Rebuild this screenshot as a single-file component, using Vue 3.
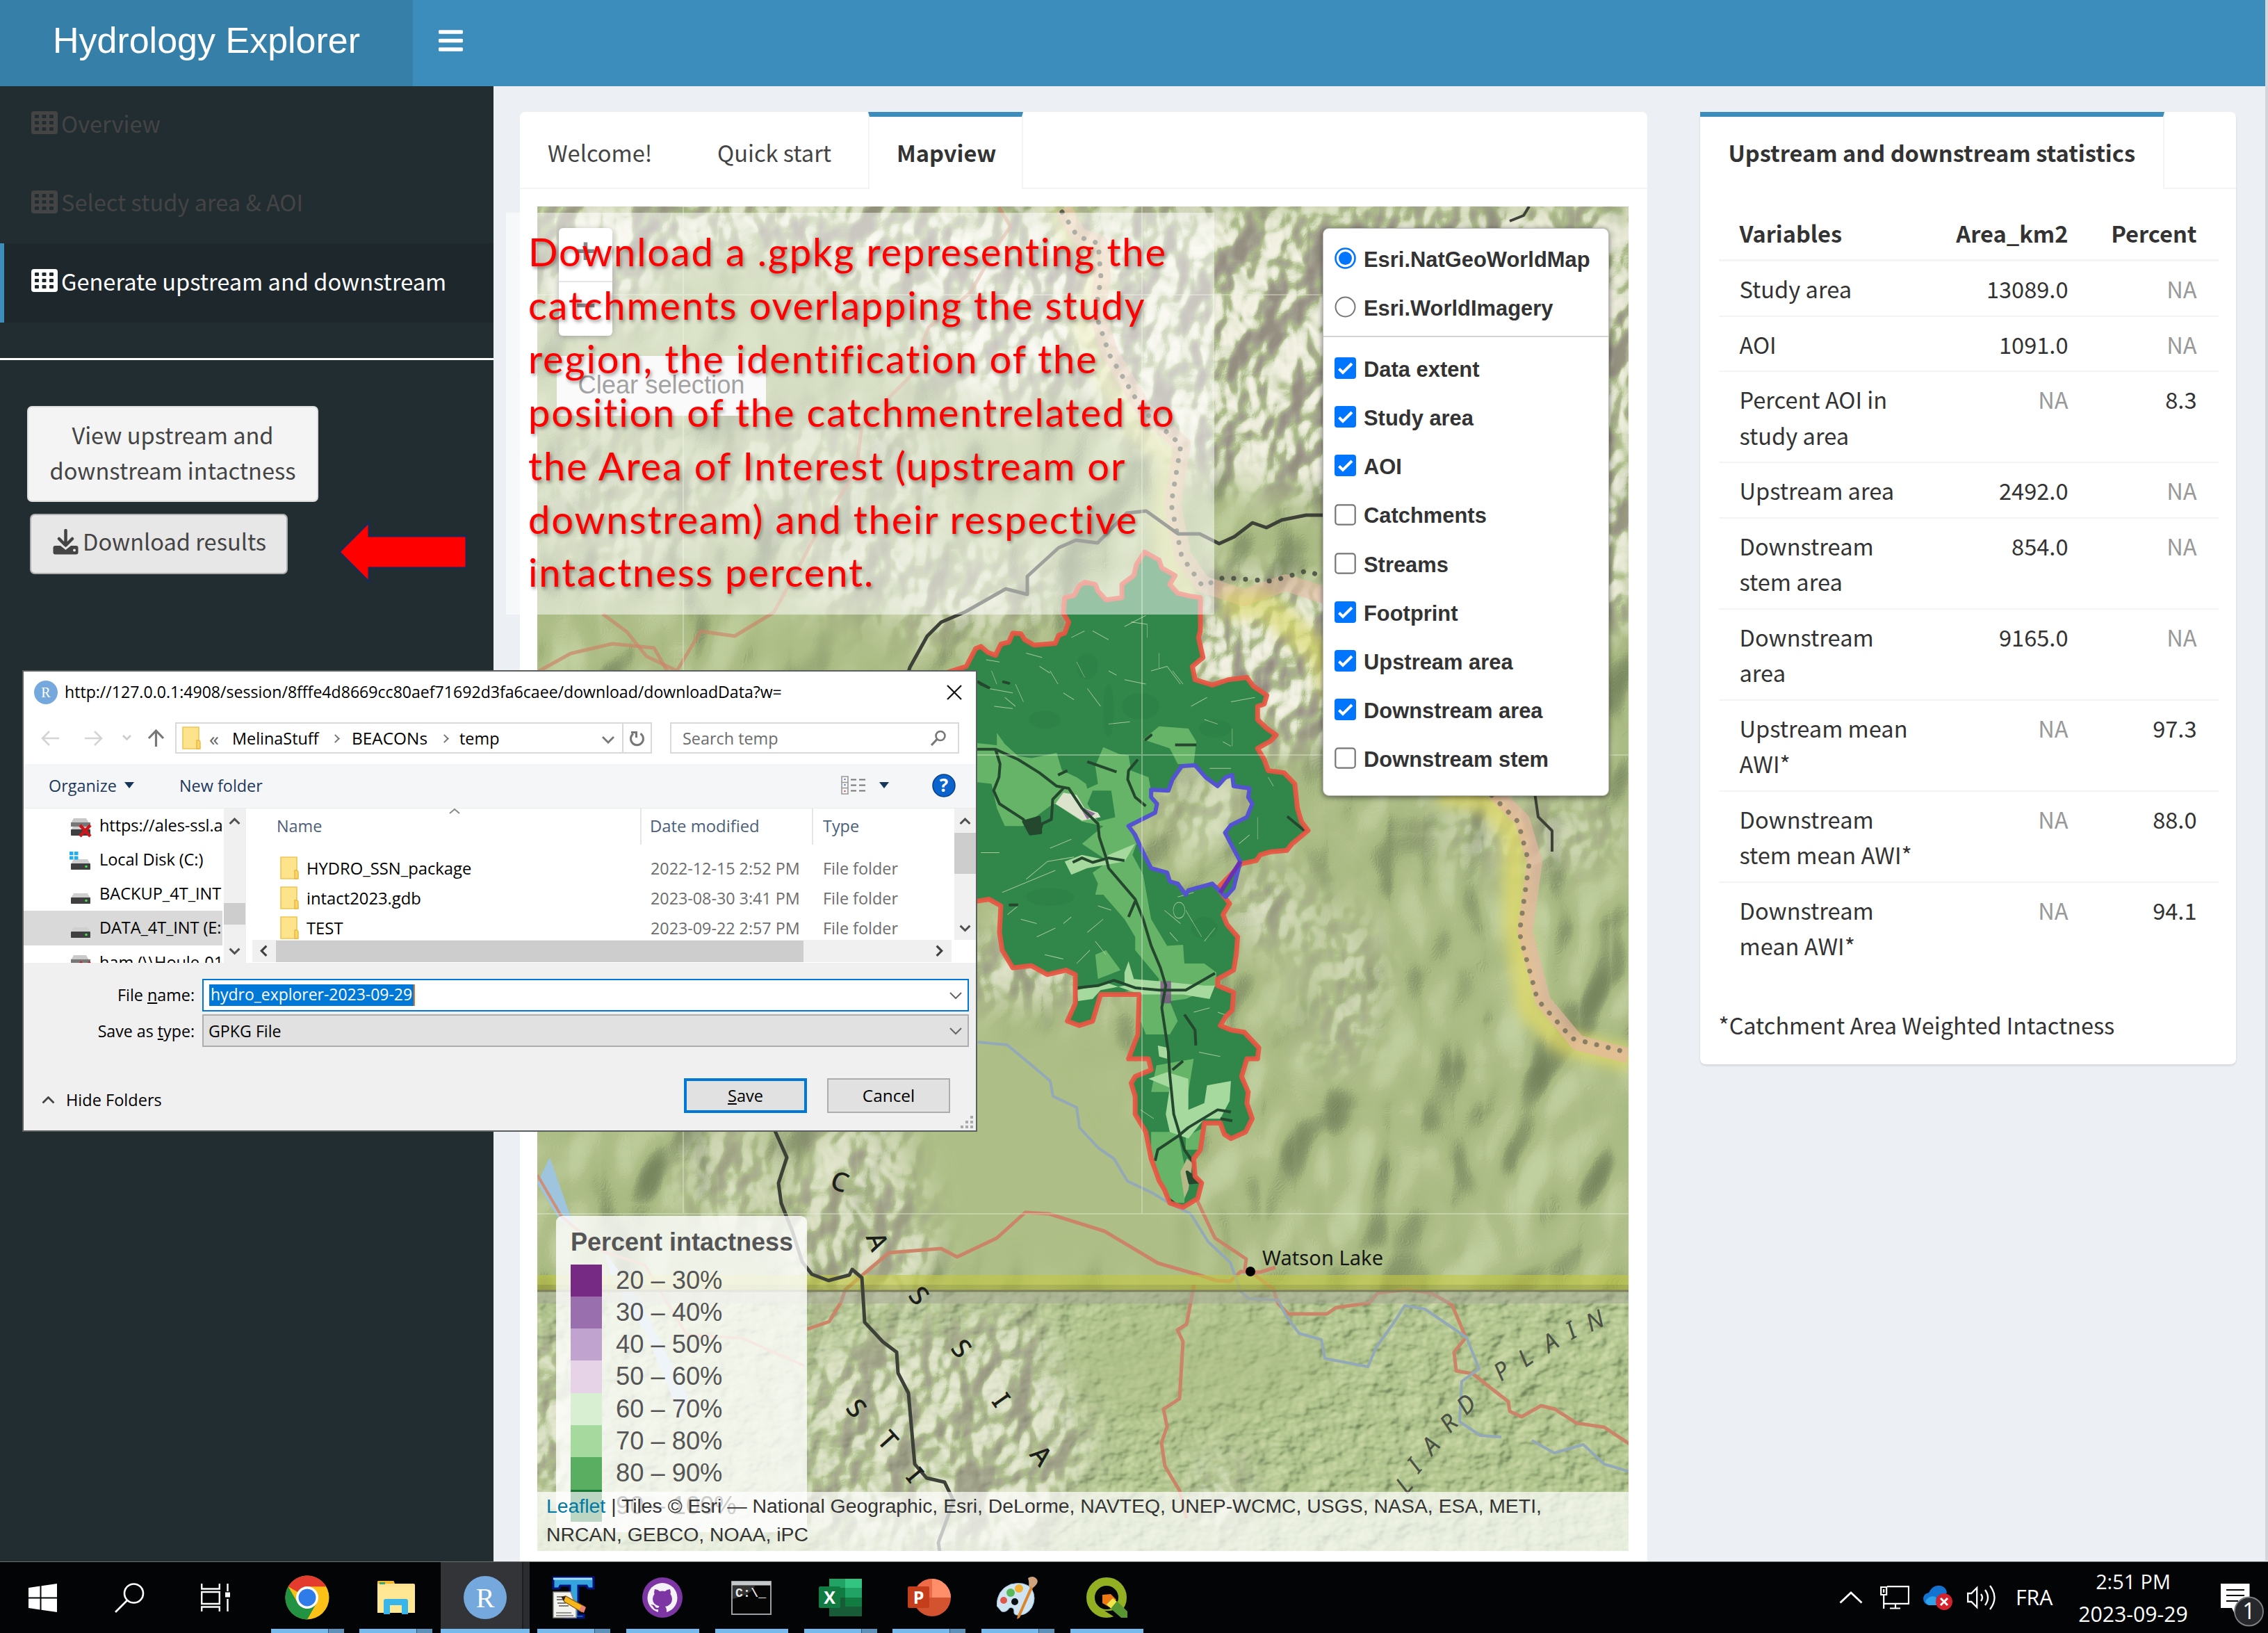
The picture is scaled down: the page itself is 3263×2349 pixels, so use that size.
<script setup>
const menu = [
  { label: 'Overview', active: false },
  { label: 'Select study area & AOI', active: false },
  { label: 'Generate upstream and downstream', active: true },
]

const stats = [
  ['Study area', '13089.0', 'NA'],
  ['AOI', '1091.0', 'NA'],
  ['Percent AOI in study area', 'NA', '8.3'],
  ['Upstream area', '2492.0', 'NA'],
  ['Downstream stem area', '854.0', 'NA'],
  ['Downstream area', '9165.0', 'NA'],
  ['Upstream mean AWI*', 'NA', '97.3'],
  ['Downstream stem mean AWI*', 'NA', '88.0'],
  ['Downstream mean AWI*', 'NA', '94.1'],
]

const baseLayers = [
  { label: 'Esri.NatGeoWorldMap', on: true },
  { label: 'Esri.WorldImagery', on: false },
]
const overlays = [
  { label: 'Data extent', on: true },
  { label: 'Study area', on: true },
  { label: 'AOI', on: true },
  { label: 'Catchments', on: false },
  { label: 'Streams', on: false },
  { label: 'Footprint', on: true },
  { label: 'Upstream area', on: true },
  { label: 'Downstream area', on: true },
  { label: 'Downstream stem', on: false },
]

const legend = [
  ['#762a83', '20 – 30%'],
  ['#9a6fad', '30 – 40%'],
  ['#c0a4cf', '40 – 50%'],
  ['#e6d3e8', '50 – 60%'],
  ['#d8efd2', '60 – 70%'],
  ['#a5d99e', '70 – 80%'],
  ['#5aae61', '80 – 90%'],
  ['#1b7837', '90 – 100%'],
]

const note = [
  'Download a .gpkg representing the',
  'catchments overlapping the study',
  'region, the identification of the',
  'position of the catchmentrelated to',
  'the Area of Interest (upstream or',
  'downstream) and their respective',
  'intactness percent.',
]

const drives = [
  { label: 'https://ales-ssl.a', kind: 'broken' },
  { label: 'Local Disk (C:)', kind: 'win' },
  { label: 'BACKUP_4T_INT', kind: 'disk' },
  { label: 'DATA_4T_INT (E:', kind: 'disk', selected: true },
  { label: 'ham (\\\\Houle-01', kind: 'broken' },
]
const files = [
  ['HYDRO_SSN_package', '2022-12-15 2:52 PM'],
  ['intact2023.gdb', '2023-08-30 3:41 PM'],
  ['TEST', '2023-09-22 2:57 PM'],
]

const mapLetters = [
  ['C', 1208, 1700, 20], ['A', 1262, 1786, 68], ['S', 1322, 1864, 50], ['S', 1383, 1940, 50], ['I', 1440, 2014, 55], ['A', 1498, 2094, 50],
  ['S', 1232, 2026, 50], ['T', 1277, 2072, 48], ['I', 1316, 2122, 50],
]
const plainLetters = [
  ['L', 2021, 2137, -50], ['I', 2036, 2109, -50], ['A', 2059, 2080, -48], ['R', 2085, 2048, -46], ['D', 2110, 2021, -44],
  ['P', 2161, 1973, -36], ['L', 2195, 1954, -35], ['A', 2231, 1932, -33], ['I', 2261, 1915, -30], ['N', 2295, 1901, -25],
]

const tasks = ['chrome', 'folder', 'r', 't', 'github', 'cmd', 'excel', 'ppt', 'paint', 'qgis']
const stacked = ['chrome', 'folder', 't', 'excel', 'ppt', 'paint']

const region = '105,280 140,240 160,235 185,248 215,255 235,230 265,225 280,205 310,206 325,220 360,232 440,228 452,210 475,205 490,180 470,160 475,125 510,120 530,98 550,90 590,95 600,110 630,130 690,125 690,95 735,75 745,50 775,22 830,40 840,58 890,75 870,95 900,115 950,122 985,125 985,200 978,215 995,260 955,280 965,310 1030,322 1090,310 1160,305 1185,325 1235,345 1225,365 1200,370 1200,400 1235,420 1270,435 1250,448 1200,465 1225,490 1240,515 1300,520 1340,545 1350,600 1365,630 1390,650 1330,680 1310,695 1250,698 1210,705 1195,718 1140,725 1050,780 1095,815 1070,840 1085,862 1125,890 1120,930 1110,965 1050,985 1050,1000 1110,1015 1105,1055 1080,1070 1060,1090 1100,1100 1150,1105 1205,1140 1200,1165 1160,1165 1140,1205 1165,1240 1160,1265 1180,1300 1155,1330 1100,1345 1075,1335 1060,1310 1000,1310 985,1370 960,1390 965,1430 990,1445 975,1480 920,1500 870,1490 850,1460 830,1440 800,1390 780,1330 740,1290 740,1250 725,1220 740,1205 800,1190 790,1165 715,1165 750,1110 755,1020 610,1020 580,1080 530,1090 485,1080 515,1040 515,975 480,965 410,975 350,955 280,960 240,920 230,880 235,820 190,805 140,810 0,700 0,300'
const aoi = '715,640 815,610 822,590 800,575 800,558 865,560 880,535 915,505 965,503 1005,530 1050,550 1080,530 1105,525 1110,550 1170,555 1165,575 1180,590 1160,620 1100,638 1078,655 1135,720 1110,780 1080,800 1030,770 940,785 930,795 900,770 870,765 860,745 800,735 770,700 740,660'
const regionPath = `M${region}ZM${aoi}Z`
</script>

<template>
  <div class="screen">
    <header class="top">
      <div class="logo">Hydrology Explorer</div>
      <svg class="burger" viewBox="0 0 35 31"><path d="M2 3h31M2 15.500h31M2 28h31" stroke="#fff" stroke-width="5.500" stroke-linecap="round" /></svg>
    </header>

    <div class="body">
      <aside class="side">
        <div v-for="m in menu" :key="m.label" class="item" :class="{ active: m.active }">
          <svg viewBox="0 0 38 33"><rect width="38" height="33" rx="4" fill="currentColor" /><g class="holes"><template v-for="r in 3" :key="r"><rect v-for="k in 3" :key="k" :x="5 + (k - 1) * 10.500" :y="5 + (r - 1) * 9" width="6" height="5" rx="1" /></template></g></svg>
          <span>{{ m.label }}</span>
        </div>
        <div class="rule"></div>
        <button class="btn view">View upstream and<br />downstream intactness</button>
        <button class="btn dl">
          <svg viewBox="0 0 37 37"><path d="M18.500 2v20M9 14l9.500 9.500L28 14" fill="none" stroke="#444" stroke-width="4.500" stroke-linecap="round" stroke-linejoin="round" /><path d="M3.500 24H11l7.500 6 7.500-6h7.500q3 0 3 3v6.500q0 3-3 3h-30q-3 0-3-3V27q0-3 3-3z" fill="#444" /><circle cx="31" cy="30.500" r="2" fill="#e7e7e7" /></svg>
          Download results
        </button>
      </aside>

      <main class="main">
        <section class="card mapcard">
          <nav class="tabs">
            <span class="t1">Welcome!</span><span class="t2">Quick start</span><span class="t3 on">Mapview</span><span class="fill"></span>
          </nav>
          <div class="map">
            <svg class="tiles" viewBox="773 297 1570 1934">
              <defs>
                <filter id="hills" x="0" y="0" width="1" height="1" color-interpolation-filters="sRGB">
                  <feTurbulence type="fractalNoise" baseFrequency=".011 .0075" numOctaves="2" seed="12" />
                  <feDiffuseLighting surfaceScale="34" lighting-color="#fff"><feDistantLight azimuth="215" elevation="48" /></feDiffuseLighting>
                  <feComponentTransfer><feFuncR type="table" tableValues=".45 .48 .55 .66 .69 .76" /><feFuncG type="table" tableValues=".5 .54 .61 .73 .75 .82" /><feFuncB type="table" tableValues=".34 .38 .43 .51 .54 .63" /></feComponentTransfer>
                </filter>
                <filter id="peaks" x="0" y="0" width="1" height="1" color-interpolation-filters="sRGB">
                  <feTurbulence type="fractalNoise" baseFrequency=".015 .012" numOctaves="3" seed="5" />
                  <feDiffuseLighting surfaceScale="40" lighting-color="#fff"><feDistantLight azimuth="215" elevation="48" /></feDiffuseLighting>
                  <feComponentTransfer><feFuncR type="table" tableValues=".58 .62 .65 .68 .86 .96" /><feFuncG type="table" tableValues=".56 .6 .66 .74 .88 .95" /><feFuncB type="table" tableValues=".5 .55 .56 .54 .78 .9" /></feComponentTransfer>
                </filter>
                <filter id="fine" x="0" y="0" width="1" height="1" color-interpolation-filters="sRGB">
                  <feTurbulence type="fractalNoise" baseFrequency=".03 .04" numOctaves="3" seed="9" />
                  <feDiffuseLighting surfaceScale="7" lighting-color="#fff"><feDistantLight azimuth="215" elevation="48" /></feDiffuseLighting>
                  <feComponentTransfer><feFuncR type="table" tableValues=".4 .46 .56 .67 .72 .8" /><feFuncG type="table" tableValues=".48 .52 .64 .75 .79 .85" /><feFuncB type="table" tableValues=".34 .36 .45 .54 .58 .66" /></feComponentTransfer>
                </filter>
                <filter id="soft" x="-.3" y="-.3" width="1.600" height="1.600"><feGaussianBlur stdDeviation="28" /></filter>
                <filter id="soft2" x="-.5" y="-.5" width="2" height="2"><feGaussianBlur stdDeviation="9" /></filter>
                <mask id="mtn">
                  <g filter="url(#soft)" fill="#fff">
                    <rect x="760" y="280" width="640" height="90" /><rect x="780" y="330" width="180" height="130" />
                    <path d="M1150 290h1220v340l-120 20-250 90-300-60-160-120-120 30-200-100-100-80z" />
                    <ellipse cx="1200" cy="690" rx="170" ry="110" opacity=".5" /><ellipse cx="900" cy="720" rx="130" ry="130" opacity=".4" />
                    <ellipse cx="1330" cy="850" rx="200" ry="70" opacity=".7" />
                    <path d="M1740 820l220 40 0 190-120 40-90-60-60-80z" />
                    <rect x="2250" y="400" width="110" height="500" />
                    <ellipse cx="1840" cy="1310" rx="60" ry="50" /><ellipse cx="1920" cy="1420" rx="60" ry="110" opacity=".7" /><ellipse cx="1480" cy="1400" rx="140" ry="50" opacity=".7" />
                    <ellipse cx="1740" cy="1160" rx="80" ry="60" opacity=".5" />
                    <ellipse cx="2200" cy="1200" rx="150" ry="50" opacity=".5" />
                    <ellipse cx="1050" cy="1690" rx="70" ry="80" opacity=".6" /><path d="M1180 1600h180l40 120-80 140-170 20-40-100z" opacity=".7" />
                    <path d="M1160 1940l320-60 100 200-90 160-340-20z" opacity=".75" /><rect x="765" y="1930" width="60" height="240" />
                    <ellipse cx="1760" cy="2160" rx="30" ry="70" opacity=".8" />
                  </g>
                </mask>
                <mask id="flat">
                  <g filter="url(#soft)" fill="#fff">
                    <path d="M1400 1460l180 20 130 260 60 90-380 20-60-120-40-130z" /><rect x="1080" y="860" width="220" height="110" opacity=".7" />
                    <ellipse cx="1720" cy="1960" rx="190" ry="80" opacity=".6" /><ellipse cx="1880" cy="1380" rx="60" ry="150" opacity=".5" />
                    <ellipse cx="1050" cy="430" rx="160" ry="60" opacity=".5" /><ellipse cx="1230" cy="500" rx="120" ry="90" opacity=".4" />
                  </g>
                </mask>
                <clipPath id="hole"><path :d="regionPath" clip-rule="evenodd" /></clipPath>
              </defs>
              <rect x="773" y="297" width="1570" height="1561" filter="url(#hills)" />
              <rect x="773" y="1857" width="1570" height="374" filter="url(#fine)" />
              <g mask="url(#mtn)"><rect x="773" y="297" width="1570" height="1934" filter="url(#peaks)" /></g>
              <g mask="url(#flat)"><rect x="773" y="297" width="1570" height="1934" fill="#adbe86" /></g>

              <g fill="none" stroke-linejoin="round">
                <path d="M1522 300l16 40 44 30-4 45-22 50 25 60 50 90 55 45-14 85 15 75 30 40" stroke="#dfe08a" stroke-width="34" opacity=".6" filter="url(#soft2)" />
                <path d="M1530 300l22 40 30 10 4 50-8 50 20 60 48 80 55 50-14 85 15 75 28 40 60 20 60-22 60 20 50 60 50 60 35 40" stroke="#eab9a8" stroke-width="24" opacity=".55" />
                <path d="M1760 870l60 0 80 70 30 80" stroke="#d9d860" stroke-width="40" opacity=".6" filter="url(#soft2)" />
                <path d="M2070 1140l70 10 40 50 0 130 20 120 50 50 100 24" stroke="#dfd968" stroke-width="36" opacity=".75" filter="url(#soft2)" />
                <path d="M2150 1140l40 40 18 60-14 100 26 100 50 60 72 18" stroke="#eab5a5" stroke-width="22" opacity=".65" />
                <g stroke="#444b3c" stroke-width="7" stroke-linecap="round" stroke-dasharray=".1 17">
                  <path d="M1528 305l22 35 30 10 4 50-8 50 20 60 48 80 55 50-14 85 15 75 30 43 30-12 70 5 50-15 60 22 50 60 50 50 30 36" opacity=".85" />
                  <path d="M2146 1144l38 38 16 60-14 100 26 96 50 56 80 20" opacity=".55" />
                </g>
                <path d="M773 1702l32 53 22 12-36-102z" fill="#9ec4de" stroke="none" />
                <path d="M870 1800l50 70 40 80 30 60-10 30-50-120-50-80z" fill="#a9c9dd" stroke="none" />
                <path d="M773 1690l35 60 60 50 60 20 60 100 80 5 90 40" stroke="#cf8f76" stroke-width="4" />
                <g stroke="#cc8468" stroke-width="5">
                  <path d="M1161 1912l32-11 17-28 6-18 63-53 75-6 23 12 57-27 41-37 34 2 80 25 52 31 25 15 59 17 25 8 20 1 15-14 28 1 22-7" />
                  <path d="M1723 1728l25 53 45 30-2 14 17 11 24 18 6 20 15 16 56 0 13-9 48-7 12-14 41-5 36 5 30 17 20 47-17 21 3 27 24 4 25 20 26 20 2 14 17 8 28-16 20 5 31 20 40 6 39 26" />
                  <path d="M1718 1848l-11 57-13 8 8 17-5 82-23 15 5 25-8 24 5 33 21 35 10 40" />
                  <path d="M1437 298l17 28-18 25-40 70-60 50-26 70-70 70-8 66-56 88-35 66-28 50-56 34-49-7-36 60m-105-85l35 26 28 35 42 20" opacity=".65" />
                  <path d="M776 965l45-25 60-14 60 6 20 35" opacity=".7" />
                </g>
                <path d="M1407 1499l42 4 35 29 27 23 4 22 34 16 4 29 27 29 23 16 19 32 34 16 27 16 30 15 25 40 32 30 15 42 12 10 42 2 12 24 18 24 32 9 5 27 62 12 12-28 25-35 16-25 29 5 25 17 35 24 18 45-25 18-3 58 30 20 30 2m44 5l32 18 42-12 30 28 50 15 34 25" stroke="#93a9b8" stroke-width="4" />
              </g>

              <rect x="773" y="1834" width="1570" height="14" fill="#c3c840" opacity=".6" /><rect x="773" y="1848" width="1570" height="8" fill="#a3a834" opacity=".6" />
              <path d="M773 1857H2343" stroke="#7b7f60" stroke-width="3" /><rect x="773" y="1859" width="1570" height="16" fill="#a5a798" opacity=".55" />

              <g transform="translate(1350 780) scale(.3827 .6378)" fill="none">
                <path :d="regionPath" fill="#31864a" fill-rule="evenodd" />
                <g clip-path="url(#hole)">
                  <path d="M130 452L220 458 220 430 250 455 300 482 350 487 445 475 465 515 520 530 555 545 560 556 600 545 590 505 620 462 680 478 715 480 725 515 790 530 800 560 822 590 815 610 715 640 745 680 730 705 770 750 800 850 860 910 920 908 925 950 1000 950 1045 970 1045 1000 930 1030 870 1035 900 1080 870 1110 780 1110 760 1080 765 1020 700 1012 820 1005 830 985 740 920 740 890 700 850 620 795 590 795 600 770 580 745 640 720 590 700 540 680 620 640 540 630 440 590 420 595 320 640 250 640 220 600 200 545 130 540Z" fill="#66b468" />
                  <path d="M420 500L470 560 540 600 640 630 700 640 660 560 600 560 560 580 520 540Z" fill="#66b468" />
                  <path d="M580 560L650 560 665 620 600 630 560 590Z" fill="#31864a" />
                  <path d="M770 445L830 415 940 420 970 450 960 500 900 500 870 465ZM630 920L685 965 600 985 590 930ZM820 1180L960 1165 940 1240 800 1240Z" fill="#66b468" />
                  <path d="M800 1330L900 1330 930 1420 925 1490 860 1490 800 1390ZM930 1340L1000 1320 990 1370 930 1370Z" fill="#66b468" />
                  <path d="M440 590L470 565 520 570 550 600 600 610 610 620 540 628Z" fill="#dbe3cc" />
                  <path d="M475 720L540 705 620 715 640 705 740 680 700 720 560 735 500 750ZM700 970L715 945 735 985 830 990 1000 1000 1040 1000 1020 1030 920 1020 850 1020 760 1020 640 995 520 1010 525 1035 580 1030 610 1010 700 1000Z" fill="#a6d99d" />
                  <path d="M790 1210L860 1195 940 1210 940 1280 1000 1265 1010 1225 1100 1215 1095 1260 1060 1300 1000 1300 940 1345 870 1330 855 1290 870 1230ZM825 1135L860 1140 860 1165 830 1160Z" fill="#a6d99d" />
                  <path d="M935 1390L955 1400 940 1460 925 1480 910 1420Z" fill="#b5b98a" />
                  <path d="M530 595L590 612 560 625ZM835 990H875V1040H835Z" fill="#7a4a86" opacity=".75" />
                  <g stroke="#cfe0b4" stroke-width="1.600" opacity=".75">
                    <path d="M700 190l80-25M725 180l60 5v30M580 200l60 20M500 215l50-15M520 270l30 35M640 290l30 10M800 290l60-10 50 40M830 250v35M420 290l30 30M470 340l40 15M560 330l50 40M250 350l40 20M190 330l90 10M290 320l30 40M330 250l60 10M380 280l40 15M200 290l20 30M180 265l50 5M210 370l70 5M700 310l80 10M640 410l80-5M880 290l40 30M950 370l60-20M1000 400l50 10M1100 360l90-10M1070 450l30 10M1105 420v40M1240 530l20 20M1200 620v50M1130 680l40-20M1020 510l80 0M330 760l80-40 100-10M240 790l80-20 120-30M420 690l80-20M310 850l60 10M370 890l70-20M400 930l70 10M260 840l40-20M470 860l30-15M520 950l50-30M560 880l60-30M600 820l50 10M850 830l60 30M870 880l30 20M930 830l60 60M1000 900l40-30M900 800l60-10M960 1060l60-10M980 1150l80 10M1050 1060l50 10M760 1280l50 20M590 900l40 30M160 700l70 0" />
                    <ellipse cx="905" cy="830" rx="22" ry="18" />
                  </g>
                  <g fill="#1d7038" opacity=".16"><ellipse cx="560" cy="280" rx="40" ry="30" /><ellipse cx="400" cy="400" rx="60" ry="20" /><ellipse cx="760" cy="370" rx="70" ry="30" /><ellipse cx="640" cy="380" rx="20" ry="60" /><ellipse cx="1040" cy="420" rx="60" ry="20" /><ellipse cx="420" cy="800" rx="90" ry="20" /><ellipse cx="1000" cy="870" rx="50" ry="25" /></g>
                </g>
                <g stroke="#24482e" stroke-width="4" stroke-linejoin="round">
                  <path d="M130 467H215L300 490 380 520 445 550 490 555 540 600 600 635 605 665 630 710 640 735 740 805 770 850 800 910 835 960 855 1000 840 1050 865 1150 870 1200 885 1290 925 1370 960 1400 960 1440M215 467L232 500 228 530 208 560 230 590 320 625 345 655 380 655 390 635 425 625 430 580 470 555M505 722L540 712 580 722 640 712 700 718M740 810L715 845M520 1005L600 1000 660 988 740 1005 830 1010 930 1010 1040 972" vector-effect="non-scaling-stroke" />
                  <path d="M750 490L715 515 712 535 740 575 780 595M560 495L670 518M815 1395L825 1370 900 1340 940 1320 1050 1280 1100 1285M1060 1300L1105 1305M880 1190L920 1170M890 457H970M925 1065L965 1100 968 1135M450 525L485 515" vector-effect="non-scaling-stroke" />
                  <path d="M320 630L380 620 385 655 345 658ZM150 315L190 328 160 320ZM245 315L265 318ZM1315 620L1375 650ZM780 445L800 435ZM935 1420L985 1443 945 1445ZM265 818H300M865 1480L890 1492" fill="#24482e" vector-effect="non-scaling-stroke" />
                </g>
                <polygon :points="region" stroke="#ea5542" stroke-width="7" stroke-linejoin="round" vector-effect="non-scaling-stroke" opacity=".92" />
                <polygon :points="aoi" stroke="#5453d0" stroke-width="6" stroke-linejoin="round" vector-effect="non-scaling-stroke" />
                <path d="M1135 720L1060 790" stroke="#6b2fb0" stroke-width="6" vector-effect="non-scaling-stroke" />
              </g>

              <g fill="none" stroke="#3d4138" stroke-width="5" stroke-linejoin="round">
                <path d="M1297 1000l12-40 25-45 20-20 35-15 58-33 31 8v-26l45-41 25-11 31 4 42-43 28-3 46 33 31 0 28 14 22-10 26-20 20 7 22-11 35-7 32 0 30 13 25 33 24 24" />
                <path d="M1112 1620l20 45-12 37 4 29 16 40 14 44 14 18 24 9 30-8 4-8 14 12 4 64 26 28 20 15 2 30 15 29 9 102 17 20 26 6 13 27-22 60 6 40" />
                <path d="M2208 1140l5 35 20 20 0 30M2172 318l20-8 8-13" stroke-width="4" />
              </g>
              <path d="M773 424H2343M773 1086H2343M773 1746H2343M1643 297V1746M983 297V1746" stroke="#e8efda" stroke-width="2" opacity=".4" />
              <g class="ml"><text v-for="(l, i) in mapLetters" :key="i" :transform="`translate(${l[1]} ${l[2]}) rotate(${l[3]})`" text-anchor="middle" dy="13">{{ l[0] }}</text></g>
              <g class="pl"><text v-for="(l, i) in plainLetters" :key="i" :transform="`translate(${l[1]} ${l[2]}) rotate(${l[3]})`" text-anchor="middle" dy="11">{{ l[0] }}</text></g>
              <circle cx="1799" cy="1829" r="7" />
              <text x="1816" y="1820" textLength="174" class="town">Watson Lake</text>
            </svg>

            <div class="zoom"><span>+</span><span>−</span></div>
            <button class="clear">Clear selection</button>

            <div class="layers">
              <div class="group">
                <div v-for="b in baseLayers" :key="b.label" class="lrow">
                  <svg viewBox="0 0 31 31"><circle cx="15.500" cy="15.500" r="14" fill="#fff" :stroke="b.on ? '#0075ff' : '#767676'" :stroke-width="b.on ? 2.600 : 2" /><circle v-if="b.on" cx="15.500" cy="15.500" r="9.500" fill="#0075ff" /></svg>
                  {{ b.label }}
                </div>
              </div>
              <div class="sep"></div>
              <div class="group">
                <div v-for="o in overlays" :key="o.label" class="lrow">
                  <svg viewBox="0 0 31 31"><rect v-if="o.on" width="31" height="31" rx="4" fill="#0075ff" /><path v-if="o.on" d="M6.500 16.500l5.500 5.500L25 9" fill="none" stroke="#fff" stroke-width="4" /><rect v-else x="1.300" y="1.300" width="28.400" height="28.400" rx="4" fill="#fff" stroke="#767676" stroke-width="2.200" /></svg>
                  {{ o.label }}
                </div>
              </div>
            </div>

            <div class="legend">
              <b>Percent intactness</b>
              <div v-for="l in legend" :key="l[1]" class="lg"><i :style="{ background: l[0] }"></i>{{ l[1] }}</div>
            </div>
            <div class="attr"><a>Leaflet</a> | Tiles © Esri — National Geographic, Esri, DeLorme, NAVTEQ, UNEP-WCMC, USGS, NASA, ESA, METI,<br />NRCAN, GEBCO, NOAA, iPC</div>
          </div>
        </section>

        <section class="card stats">
          <nav class="tabs"><span class="s1 on">Upstream and downstream statistics</span><span class="fill"></span></nav>
          <div class="table">
            <div class="tr th"><span class="c1">Variables</span><span class="c2">Area_km2</span><span class="c3">Percent</span></div>
            <div v-for="r in stats" :key="r[0]" class="tr">
              <span class="c1">{{ r[0] }}</span><span class="c2" :class="{ na: r[1] === 'NA' }">{{ r[1] }}</span><span class="c3" :class="{ na: r[2] === 'NA' }">{{ r[2] }}</span>
            </div>
          </div>
          <p>*Catchment Area Weighted Intactness</p>
        </section>
      </main>
    </div>

    <footer class="taskbar">
      <div class="sys w1"><svg width="41" height="41" viewBox="0 0 41 41"><path d="M0 6l16.500-2.500V19.500H0zM18.500 3.200L41 0v19.500H18.500zM0 21.500h16.500V37.500L0 35zM18.500 21.500H41V41l-22.500-3.200z" fill="#fff" /></svg></div>
      <div class="sys w2"><svg width="43" height="43" viewBox="0 0 43 43" fill="none" stroke="#fff" stroke-width="2.600"><circle cx="27.500" cy="15" r="13.500" /><path d="M18 25L1 42" /></svg></div>
      <div class="sys w3"><svg width="43" height="42" viewBox="0 0 43 42" fill="none" stroke="#fff" stroke-width="2.400"><path d="M1.200 1v7.500h25.600V1M1.200 13h25.600v17H1.200zM1.200 41v-6.500h25.600V41M38.500 1v11M38.500 23v18" /><rect x="35" y="13.500" width="7" height="7" fill="#fff" stroke="none" /></svg></div>
      <div v-for="t in tasks" :key="t" class="task" :class="{ current: t === 'r', stacked: stacked.includes(t) }">
        <svg v-if="t === 'chrome'" width="64" height="64" viewBox="0 0 64 64"><circle cx="32" cy="32" r="31.500" fill="#fbc116" /><path d="M32 32L4.700 16.200A31.500 31.500 0 0 1 59.300 16.200H32z" fill="#e33b2e" /><path d="M4.700 16.200A31.500 31.500 0 0 0 32 63.500L45.500 40 32 32 18.500 40z" fill="#229342" /><circle cx="32" cy="32" r="16" fill="#fff" /><circle cx="32" cy="32" r="12.500" fill="#2f7be8" /></svg>
        <svg v-else-if="t === 'folder'" width="54" height="48" viewBox="0 0 54 48"><path d="M0 2q0-2 2-2h20q2 0 2 2v2h28q2 0 2 2v40H0z" fill="#fde391" /><path d="M0 2q0-2 2-2h20q2 0 3 4H0z" fill="#f3b92b" /><path d="M3 2h8v3H3z" fill="#3aa76d" /><path d="M0 9h54v34q0 3-3 3H3q-3 0-3-3z" fill="#ffe794" /><path d="M9 48V29q0-3 3-3h29q3 0 3 3v19h-9V35H18v13z" fill="#38b6ea" /></svg>
        <svg v-else-if="t === 'r'" width="62" height="62" viewBox="0 0 62 62"><circle cx="31" cy="31" r="31" fill="#75a9dd" /><text x="31" y="45" text-anchor="middle" class="rlogo">R</text></svg>
        <svg v-else-if="t === 't'" width="62" height="62" viewBox="0 0 62 62"><path d="M2 2h58v16h-8l-2-4H38v42h8v4H20v-4h6V14H12l-2 4H2z" fill="#35a3dc" stroke="#06157e" stroke-width="3" /><path d="M2 4h56" stroke="#a3e0fa" stroke-width="3" /><path d="M2 23h25l8 22v15H2z" fill="#f2f2ee" stroke="#8a8a88" stroke-width="1.500" /><path d="M6 53h22M6 57h25" stroke="#777" stroke-width="1.500" /><path d="M7 30h12M7 34h10M8 39h12M10 43h14" stroke="#555" stroke-width="1.500" /><path d="M14 30l6-1 27 15-4 8-25-15z" fill="#f5b71b" stroke="#8a5a0c" stroke-width="1.200" /><path d="M43 42l6 3-3 8-7-4z" fill="#e88374" /><path d="M14 30l6-1-3 7z" fill="#222" /></svg>
        <svg v-else-if="t === 'github'" width="58" height="58" viewBox="0 0 58 58"><circle cx="29" cy="29" r="29" fill="#7d35a3" /><circle cx="29" cy="29.500" r="21.500" fill="#f4f2f8" /><path d="M18 17q5 .5 7 3 4-1 8 0 2-2.500 7-3 1.500 4 .5 7Q43 27 43 31q0 9-10 11 2 2 2 5v4H23v-5q-5 1-7-3-1-3-4-3.500 5-1 7 3 1.500 2 4.500 1 .2-1 1.200-2Q15 39 15 31q0-4 2.500-7-1-3 .5-7z" fill="#7d35a3" /></svg>
        <svg v-else-if="t === 'cmd'" width="58" height="49" viewBox="0 0 58 49"><rect x="1" y="1" width="56" height="47" fill="#050505" stroke="#9aa0a4" stroke-width="2" /><rect x="1" y="1" width="56" height="5.500" fill="#c4c8cb" /><path d="M2 26Q30 20 34 7H2z" fill="#333" /><text x="6" y="23" textLength="44" class="cmdt">C:\_</text></svg>
        <svg v-else-if="t === 'excel'" width="62" height="54" viewBox="0 0 62 54"><path d="M15 0h24v14H15z" fill="#21a366" /><path d="M38 0h24v14H38z" fill="#33c481" /><path d="M15 13h24v14H15z" fill="#107c41" /><path d="M38 13h24v14H38z" fill="#21a366" /><path d="M15 27h47v27H15z" fill="#185c37" /><path d="M38 27h24v13H38z" fill="#107c41" /><rect y="11" width="31" height="31" rx="2" fill="#107c41" /><text x="15.500" y="35.500" text-anchor="middle" class="offt">X</text></svg>
        <svg v-else-if="t === 'ppt'" width="62" height="54" viewBox="0 0 62 54"><circle cx="35" cy="27" r="27" fill="#d35230" /><path d="M35 0v27H8A27 27 0 0 1 35 0z" fill="#ed6c47" /><path d="M35 0a27 27 0 0 1 27 27H35z" fill="#ff8f6b" /><rect y="11" width="31" height="31" rx="2" fill="#c43e1c" /><text x="15.500" y="35.500" text-anchor="middle" class="offt">P</text></svg>
        <svg v-else-if="t === 'paint'" width="62" height="62" viewBox="0 0 62 62"><path d="M0 43Q0 20 20 12 40 7 50 18q8 14 0 28-8 12-22 10-4-1-3-6-1-6-7-4-4 7-11 5z" fill="#cfe4f2" stroke="#9fc3dc" stroke-width="1" /><circle cx="26" cy="37" r="5" fill="#0a1016" /><circle cx="10" cy="35" r="5" fill="#e0574a" /><circle cx="20" cy="24" r="6" fill="#58b95a" /><circle cx="32" cy="18" r="6" fill="#f2b134" /><path d="M49 14l4 1-20 45-4 2 1-5z" fill="#d9862f" /><path d="M45 3q8-5 13 2 3 5-6 12l-6-2q1-6-1-12z" fill="#cda27c" /></svg>
        <svg v-else width="60" height="58" viewBox="0 0 60 58"><circle cx="29" cy="29" r="23" fill="none" stroke="#93b023" stroke-width="12" /><path d="M26 48q14 2 24-8l6 12-14 6z" fill="#050608" /><path d="M23 25l12-1 8 8-8 12-12-7z" fill="#ee7913" /><path d="M29 39l9-9 6 5-6 12z" fill="#f0e64a" /><path d="M35 45l9-11 15 15v9H50z" fill="#589632" /></svg>
        <u></u>
      </div>
      <div class="tray">
        <svg width="34" height="18" viewBox="0 0 34 18"><path d="M1.500 16.500L17 2l15.500 14.500" fill="none" stroke="#fff" stroke-width="2.800" /></svg>
        <svg class="g1" width="42" height="34" viewBox="0 0 42 34" fill="none" stroke="#fff" stroke-width="2.200"><path d="M10 1.200h31v24.600H6M22 26v6M14 32.500h15" /><path d="M1.200 2h8v11h-8zM5.200 13v20M5.200 5v5" /></svg>
        <svg class="g2" width="42" height="36" viewBox="0 0 42 36"><path d="M8 11Q14-1 25 1q8 2 9 10L18 29H8Q0 27 0 19q1-7 8-8z" fill="#1273d0" /><path d="M3 24Q8 14 18 17l3 12H8q-3-1-5-5z" fill="#2fa3ea" /><circle cx="30" cy="24" r="12" fill="#d3222c" /><path d="M25 19l10 10M35 19L25 29" stroke="#fff" stroke-width="3" /></svg>
        <svg class="g3" width="42" height="38" viewBox="0 0 42 38" fill="none" stroke="#fff" stroke-width="2.300"><path d="M1.200 13h5l8-8v28l-8-8h-5zM20 14q4 5 0 10M26 8q8 11 0 22M33 2q13 17 0 34" /></svg>
        <span class="lang">FRA</span>
        <div class="clock"><span class="tm">2:51 PM</span><span>2023-09-29</span></div>
        <svg class="notif" width="62" height="62" viewBox="0 0 62 62"><path d="M0 0h41.500v35H24l-4 8-4-8H0z" fill="#fff" /><path d="M8 9h26M8 17h26M8 25h17" stroke="#050608" stroke-width="2.200" /><circle cx="40.500" cy="40" r="20.500" fill="#26282b" stroke="#7f8285" stroke-width="1.800" /><text x="40.500" y="51" text-anchor="middle" class="bdg">1</text></svg>
      </div>
    </footer>

    <div class="edge"></div>
    <svg class="arrow" viewBox="0 0 186 92"><path d="M2 46L45 3v20h140v46H45v20z" fill="#f00" stroke="#172c51" stroke-width="3" /></svg>
    <div class="note"><div v-for="n in note" :key="n">{{ n }}</div></div>

    <div class="dialog">
      <div class="title">
        <svg width="34" height="34" viewBox="0 0 34 34"><circle cx="17" cy="17" r="17" fill="#75a9dd" /><text x="17" y="24" text-anchor="middle" class="rsmall">R</text></svg>
        <span>http://127.0.0.1:4908/session/8fffe4d8669cc80aef71692d3fa6caee/download/downloadData?w=</span>
        <svg class="x" width="22" height="22" viewBox="0 0 22 22"><path d="M1 1l20 20M21 1L1 21" stroke="#111" stroke-width="2.200" /></svg>
      </div>
      <div class="navrow">
        <svg class="arrows" width="215" height="30" viewBox="0 0 215 30" fill="none" stroke-width="2.600"><path d="M51 15H27M37 5L27 15l10 10" stroke="#d4d4d4" /><path d="M88 15h24M102 5l10 10-10 10" stroke="#d4d4d4" /><path d="M143 11l5.500 5.500L154 11" stroke="#ccc" /><path d="M190.500 27V5M180 15l10.500-11L201 15" stroke="#777" stroke-width="3.200" /></svg>
        <div class="addr">
          <svg class="fold" viewBox="0 0 27 33"><path d="M1 1h23v31H1z" fill="#fde38b" stroke="#edc655" stroke-width="1.600" /><path d="M21 20q5-1 5 3v9h-5z" fill="#fbd667" stroke="#e6b93f" stroke-width="1.400" /></svg>
          <span class="ar">«</span><span class="p1">MelinaStuff</span><span class="gt"></span><span class="p2">BEACONs</span><span class="gt"></span><span class="p3">temp</span>
          <svg class="chev" viewBox="0 0 20 12"><path d="M2 2l8 8 8-8" fill="none" stroke="#777" stroke-width="2.800" /></svg>
          <div class="ref"><svg viewBox="0 0 24 24" width="24" height="24" fill="none" stroke="#777" stroke-width="3"><path d="M16.500 5.200A9 9 0 1 1 6 5.500" /><path d="M3 3.500h7.500V11" /></svg></div>
        </div>
        <div class="search"><span>Search temp</span><svg width="24" height="24" viewBox="0 0 24 24" fill="none" stroke="#777"><circle cx="15" cy="8.500" r="6.500" stroke-width="2.600" /><path d="M10.500 13L2 22" stroke-width="3.200" /></svg></div>
      </div>
      <div class="tools">
        <span class="o">Organize</span><i class="tri"></i><span class="nf">New folder</span>
        <svg class="vw" width="36" height="27" viewBox="0 0 36 27" fill="none" stroke="#999" stroke-width="1.600"><path d="M1 1h9v25H1zM1 9.500h9M1 17.500h9" /><path d="M14 5.500h8M26 5.500h9M14 13.500h8M26 13.500h9M14 21.500h8M26 21.500h9" stroke="#777" stroke-width="2" /><path d="M4.500 5h2M4.500 13h2" stroke="#57a" stroke-width="2" /><path d="M4.500 22h2" stroke="#c44" stroke-width="2" /></svg>
        <i class="tri b"></i>
        <svg class="help" width="34" height="34" viewBox="0 0 34 34"><circle cx="17" cy="17" r="16" fill="#0b63ce" stroke="#0a3f86" stroke-width="1.500" /><text x="17" y="26" text-anchor="middle" class="q">?</text></svg>
      </div>
      <div class="panes">
        <div class="tree">
          <div v-for="d in drives" :key="d.label" class="drv" :class="{ sel: d.selected }">
            <svg width="32" height="30" viewBox="0 0 32 30"><path v-if="d.kind === 'broken'" d="M6 2h18l4 7H2z" fill="#c9c9c9" /><path d="M6 12h20l4 7H2z" fill="#cfcfcf" /><rect x="2" y="18" width="28" height="9" rx="1" fill="#3d3f40" /><circle cx="24" cy="22.500" r="1.800" fill="#4be04b" /><g v-if="d.kind === 'win'" fill="#1fb0ef"><path d="M0 1h5.500v5H0zM7 1h5.500v5H7zM0 7.500h5.500v5H0zM7 7.500h5.500v5H7z" /></g><g v-if="d.kind === 'broken'"><rect x="2" y="8" width="28" height="6" fill="#777" /><path d="M15 12l15 16M30 12L15 28" stroke="#d0141c" stroke-width="4.500" /></g></svg>
            <span>{{ d.label }}</span>
          </div>
        </div>
        <div class="vbar left"><svg viewBox="0 0 16 10"><path d="M1.500 8.500L8 2l6.500 6.500" /></svg><i></i><svg viewBox="0 0 16 10"><path d="M1.500 1.500L8 8l6.500-6.500" /></svg></div>
        <div class="list">
          <div class="upper">
            <div class="cols">
              <div class="hd"><span class="n">Name</span><span class="d">Date modified</span><span class="ty">Type</span><svg class="sort" viewBox="0 0 16 8"><path d="M1 7l7-6 7 6" fill="none" stroke="#888" stroke-width="2" /></svg></div>
              <div v-for="f in files" :key="f[0]" class="fr">
                <svg class="fold" viewBox="0 0 27 33"><path d="M1 1h23v31H1z" fill="#fde38b" stroke="#edc655" stroke-width="1.600" /><path d="M21 20q5-1 5 3v9h-5z" fill="#fbd667" stroke="#e6b93f" stroke-width="1.400" /></svg>
                <span class="n">{{ f[0] }}</span><span class="d">{{ f[1] }}</span><span class="ty">File folder</span>
              </div>
            </div>
            <div class="vbar right"><svg viewBox="0 0 16 10"><path d="M1.500 8.500L8 2l6.500 6.500" /></svg><i></i><svg viewBox="0 0 16 10"><path d="M1.500 1.500L8 8l6.500-6.500" /></svg></div>
          </div>
          <div class="hbar"><svg viewBox="0 0 10 16"><path d="M8.500 1.500L2 8l6.500 6.500" /></svg><i></i><svg class="r" viewBox="0 0 10 16"><path d="M1.500 1.500L8 8l-6.500 6.500" /></svg></div>
        </div>
      </div>
      <div class="form">
        <div class="frow"><label>File <u>n</u>ame:</label><div class="field name"><mark>hydro_explorer-2023-09-29</mark><svg class="chev" viewBox="0 0 20 12"><path d="M2 2l8 8 8-8" fill="none" stroke="#666" stroke-width="2" /></svg></div></div>
        <div class="frow"><label class="sv">Save as <u>t</u>ype:</label><div class="field type"><span>GPKG File</span><svg class="chev" viewBox="0 0 20 12"><path d="M2 2l8 8 8-8" fill="none" stroke="#666" stroke-width="2" /></svg></div></div>
        <div class="acts">
          <svg width="19" height="11" viewBox="0 0 19 11"><path d="M1.500 9.500l8-8 8 8" fill="none" stroke="#444" stroke-width="2.800" /></svg>
          <span class="hide">Hide Folders</span>
          <button class="save"><u>S</u>ave</button><button class="cancel">Cancel</button>
        </div>
      </div>
      <svg class="grip" width="18" height="18" viewBox="0 0 18 18" fill="#aaa"><path d="M14 0h4v4h-4zM14 7h4v4h-4zM14 14h4v4h-4zM7 7h4v4H7zM7 14h4v4H7zM0 14h4v4H0z" /></svg>
    </div>
  </div>
</template>

<style>
body { margin: 0; background: #ecf0f5; overflow: hidden; }
</style>

<style scoped>
* { box-sizing: border-box; }
.screen { position: relative; width: 3263px; height: 2349px; display: flex; flex-direction: column; overflow: hidden; background: #ecf0f5; font: 32.6px/51.5px "Noto Sans CJK SC", "Open Sans", sans-serif; color: #333; }
button { font: inherit; margin: 0; color: inherit; white-space: nowrap; }
svg { flex: none; display: block; }
.top { height: 123.5px; flex: none; display: flex; align-items: center; background: #3c8dbc; color: #fff; }
.logo { width: 594px; height: 100%; background: #367fa9; text-align: center; font: 52px/117px "Liberation Sans", Arial, sans-serif; }
.burger { width: 35px; margin: -6px 0 0 37px; }
.body { flex: 1; min-height: 0; display: flex; }

.side { width: 709.500px; flex: none; background: #222d32; display: flex; flex-direction: column; align-items: flex-start; }
.item { width: 100%; height: 113.400px; display: flex; align-items: center; padding: 0 0 7px 39px; border-left: 6px solid transparent; color: #444; white-space: nowrap; }
.item svg { width: 38px; margin: 0 5px 0 0; }
.item .holes { fill: #222d32; }
.item.active { background: #1e282c; border-left-color: #3c8dbc; color: #fff; }
.item.active .holes { fill: #1e282c; }
.rule { width: 100%; height: 3px; background: #fff; margin-top: 51px; }
.btn { border: 2px solid #ddd; border-radius: 7px; background: #f4f4f4; color: #444; }
.view { width: 419px; height: 138px; margin: 66px 0 0 39px; padding: 0 0 5px; }
.dl { width: 371px; height: 87px; margin: 17px 0 0 43px; background: #e7e7e7; border-color: #adadad; display: flex; align-items: center; padding: 0 0 8px 31px; }
.dl svg { width: 37px; margin: 2px 6px 0 0; }

.main { flex: 1; display: flex; align-items: flex-start; gap: 76px; padding: 37px 0 0 38.500px; }
.card { background: #fff; border-radius: 8px 8px 0 0; }
.tabs { display: flex; height: 111px; }
.tabs span { height: 100%; padding-top: 32px; border-bottom: 2px solid #f4f4f4; white-space: nowrap; color: #444; }
.tabs .on { border-top: 7px solid #3c8dbc; border-bottom: 0; border-right: 2px solid #f4f4f4; padding-top: 25px; font-weight: 700; color: #333; }
.tabs .fill { flex: 1; }
.t1 { width: 243px; padding-left: 40px; }
.t2 { width: 258px; padding-left: 41px; }
.t3 { width: 223px; padding-left: 39px; border-left: 2px solid #f4f4f4; }
.mapcard { width: 1621.500px; height: 2086px; flex: none; }
.map { position: relative; width: 1570px; height: 1934px; margin: 25px 0 0 25px; overflow: hidden; }
.tiles { width: 1570px; height: 1934px; }
.ml { font: 500 38px "Noto Sans", sans-serif; fill: #1c1e19; }
.pl { font: italic 35px "Noto Sans", sans-serif; fill: #4a5044; }
.town { font: 29px "Noto Sans", sans-serif; fill: #161816; }
.zoom { position: absolute; left: 31px; top: 31px; width: 77px; height: 155px; background: #fff; border-radius: 6px; box-shadow: 0 2px 8px rgba(0, 0, 0, .6); display: flex; flex-direction: column; text-align: center; font: bold 50px/74px "Liberation Mono", monospace; color: #111; }
.zoom span { flex: 1; }
.zoom span + span { border-top: 2px solid #ccc; }
.clear { position: absolute; left: 28px; top: 215px; width: 301px; height: 86px; border: 0; background: #f4f4f4; color: #444; font: 36.300px/80px "Liberation Sans", Arial, sans-serif; padding: 0 0 2px; }

.layers { position: absolute; left: 1130px; top: 31px; width: 412px; height: 817px; background: #fff; border-radius: 9px; box-shadow: 0 2px 8px rgba(0, 0, 0, .55); padding: 10px 0; font: bold 30.900px/70.100px "Liberation Sans", Arial, sans-serif; border: 1px solid #bbb; }
.lrow { display: flex; align-items: center; height: 70.100px; padding-left: 16px; white-space: nowrap; }
.lrow svg { width: 31px; margin: -5px 11px 0 0; }
.group .lrow { padding-top: 1px; }
.sep { height: 2px; background: #d4d4d4; margin: 4px 0 12px; }

.legend { position: absolute; left: 27px; top: 1452px; width: 361px; height: 455px; background: rgba(255, 255, 255, .8); border-radius: 9px; padding: 14px 0 0 21px; font: 36.300px/46.300px "Liberation Sans", Arial, sans-serif; color: #555; }
.legend b { display: block; height: 56px; line-height: 48px; font-size: 36px; }
.lg { display: flex; height: 46.300px; }
.lg i { width: 45px; height: 46.500px; margin-right: 20px; }
.attr { position: absolute; left: 0; bottom: 0; width: 1570px; height: 85px; background: rgba(255, 255, 255, .7); font: 28.400px/41.500px "Liberation Sans", Arial, sans-serif; padding-left: 13px; white-space: nowrap; color: #333; }
.attr a { color: #0078a8; }

.stats { width: 771.500px; height: 1370px; flex: none; border-radius: 8px; box-shadow: 0 2px 3px rgba(0, 0, 0, .12); }
.s1 { width: 668px; padding-left: 41px; }
.table { margin: 24px 0 0 27px; width: 719px; }
.tr { display: flex; padding: 13px 31px 13px 30px; border-bottom: 2px solid #f4f4f4; min-height: 79.500px; }
.tr:last-child { border-bottom: 0; }
.th { font-weight: 700; border-bottom-width: 3px; }
.th .c1 { font-size: 32.500px; }
.c1 { width: 255px; }
.c2 { width: 218px; text-align: right; }
.c3 { flex: 1; text-align: right; }
.na { color: #999; }
.stats p { margin: 49px 0 0 27px; font-size: 32.450px; }

.note { position: absolute; left: 728px; top: 306px; width: 1018.500px; height: 578px; padding: 18px 0 0 32px; background: rgba(255, 255, 255, .5); font: 56px/76.900px Lato, Carlito, sans-serif; letter-spacing: 1.850px; color: #f00; white-space: nowrap; text-shadow: 2px 3px 5px rgba(0, 0, 0, .4); }
.arrow { position: absolute; left: 486px; top: 748px; width: 186px; height: 92px; }
.edge { position: absolute; right: 0; top: 0; width: 4px; height: 2245px; background: #d3d6da; }

.dialog { position: absolute; left: 32px; top: 964px; width: 1374px; height: 664px; background: #f0f0f0; border: 2px solid #5c5f60; font: 23.400px/30px "Open Sans", "Noto Sans", sans-serif; color: #000; display: flex; flex-direction: column; white-space: nowrap; }
.title { height: 59px; background: #fff; display: flex; align-items: center; padding-left: 15px; flex: none; }
.title span { margin-left: 10px; font-size: 23.100px; width: 1070px; padding-bottom: 1px; }
.title .x { margin-left: 199px; }
.navrow { height: 74px; flex: none; background: #fff; display: flex; align-items: center; padding-bottom: 1px; }
.addr { margin-left: 3px; width: 686px; height: 45px; border: 2px solid #d9d9d9; display: flex; align-items: center; padding-left: 8px; position: relative; }
.fold { width: 27px; height: 33px; }
.ar { margin-left: 12px; color: #666; font-size: 28px; width: 33px; line-height: 30px; }
.p1 { width: 129px; }
.gt { width: 9px; height: 9px; border: solid #777; border-width: 2.500px 2.500px 0 0; transform: rotate(45deg); margin: 2px 16px 0 15px; flex: none; }
.p2 { font-size: 24.400px; width: 114px; margin-left: 3px; }
.p3 { margin-left: 1px; width: 62px; }
.addr .chev { position: absolute; right: 51px; top: 17px; }
.chev { width: 20px; }
.ref { position: absolute; right: 0; top: 0; width: 41px; height: 41px; border-left: 2px solid #d9d9d9; display: grid; place-items: center; }
.search { margin-left: 26px; width: 415.500px; height: 45px; border: 2px solid #d9d9d9; display: flex; align-items: center; justify-content: space-between; padding: 0 16px; color: #6d6d6d; }
.tools { height: 64px; flex: none; background: #f5f6f7; border-bottom: 1px solid #e8eaec; display: flex; align-items: center; color: #1e395b; padding-bottom: 2px; }
.tools .o { margin-left: 36px; width: 109px; }
.tri { border: 7.500px solid transparent; border-top: 9px solid #17365e; border-bottom: 0; }
.nf { margin-left: 65px; width: 130px; }
.vw { margin-left: 822px; }
.tri.b { margin-left: 19px; }
.help { margin-left: 62px; }
.q { font: 700 26px "Open Sans", sans-serif; fill: #fff; }
.panes { height: 222px; flex: none; display: flex; background: #fff; overflow: hidden; }
.tree { width: 286px; overflow: hidden; }
.drv { height: 49.400px; display: flex; align-items: center; padding-left: 66px; }
.drv:first-child { height: 48.500px; }
.drv span { margin: -1px 0 0 11px; font-size: 23.600px; letter-spacing: -.1px; }
.drv:nth-child(3) span { letter-spacing: 0; }
.drv.sel { background: #d9d9d9; }
.drv svg { margin-top: 5px; }
.vbar { width: 32px; background: #f0f0f0; display: flex; flex-direction: column; align-items: center; flex: none; }
.vbar svg { width: 17px; fill: none; stroke: #505050; stroke-width: 2.800; margin: 13px 0 11px; }
.vbar i { width: 100%; background: #cdcdcd; }
.vbar.left { margin-left: 2px; border-right: 1px solid #eee; }
.vbar.left i { height: 35px; margin: 101px 0 20px; }
.vbar.right { width: 31px; }
.vbar.right i { height: 66px; margin: 0 0 60px; }
.list { margin-left: 9px; flex: 1; display: flex; flex-direction: column; }
.upper { height: 189px; display: flex; overflow: hidden; flex: none; }
.cols { flex: 1; overflow: hidden; }
.hd { display: flex; height: 52px; color: #4c607a; line-height: 51px; position: relative; margin-bottom: 12px; }
.hd .n { width: 558px; padding-left: 35px; flex: none; }
.hd .d { width: 247px; border-left: 2px solid #e5e5e5; padding-left: 12px; font-size: 23.850px; flex: none; }
.hd .ty { border-left: 2px solid #e5e5e5; padding-left: 14px; flex: 1; }
.sort { position: absolute; left: 283px; top: 0; width: 16px; }
.fr { display: flex; align-items: center; height: 43.200px; padding-left: 40px; }
.fr .n { width: 506px; padding-left: 11px; font-size: 23.800px; flex: none; }
.fr .d { width: 248px; color: #6d6d6d; font-size: 23.300px; flex: none; }
.fr .ty { color: #6d6d6d; }
.hbar { height: 32px; background: #f0f0f0; width: 1006px; display: flex; align-items: center; }
.hbar svg { width: 11px; margin: 0 12px 0 11px; fill: none; stroke: #404040; stroke-width: 2.800; }
.hbar i { width: 759px; height: 31px; background: #cdcdcd; }
.hbar .r { margin-left: 190px; }
.form { padding-top: 23px; }
.frow { display: flex; height: 51.300px; }
.frow label { width: 246px; text-align: right; margin-right: 11px; font-size: 23.300px; line-height: 47px; }
.frow label.sv { font-size: 23.200px; line-height: 48px; }
.field { width: 1103px; height: 47px; background: #fff; border: 2px solid #0078d7; display: flex; align-items: center; justify-content: space-between; padding: 0 7px; }
.field mark { background: #0078d7; color: #fff; font-size: 22.950px; height: 31px; line-height: 29px; padding: 0 2px; border-right: 2px solid #d97b2a; margin-left: 1px; }
.field.type { background: #e1e1e1; border-color: #adadad; font-size: 23.200px; }
.acts { display: flex; align-items: center; height: 51px; margin-top: 40px; padding-left: 26px; }
.hide { margin: 11px 0 0 16px; width: 880px; font-size: 23.550px; }
.acts svg { margin-top: 12px; }
.acts button { height: 50px; background: #e1e1e1; border: 2px solid #adadad; width: 177px; font-size: 23.500px; padding: 0 0 1px; }
.acts .save { border: 4px solid #0078d7; margin-left: 9px; }
.acts .cancel { margin-left: 29px; font-size: 24.400px; }
.grip { position: absolute; right: 4px; bottom: 3px; }
.rsmall { font: 20px "Liberation Serif", serif; fill: #fff; }

.taskbar { height: 103.500px; flex: none; background: #020406; display: flex; border-top: 1px solid #6c6f70; }
.sys { display: grid; place-items: center; height: 103px; }
.w1 { width: 123px; } .w2 { width: 125px; } .w3 { width: 130px; padding-right: 6px; }
.w2 svg { margin-left: 1px; }
.task { position: relative; width: 127.850px; height: 103px; display: grid; place-items: center; }
.task u { position: absolute; left: 11.500px; bottom: 0; width: 105px; height: 6.500px; background: #76b9ed; }
.stacked u { background: linear-gradient(90deg, #76b9ed 82px, #35526a 82px, #35526a 83px, #5d91ba 83px); }
.current { background: linear-gradient(90deg, #333437 117px, #1c1d1f 117px, #1c1d1f 119px, #2b2c2f 119px); }
.current u { left: 0; width: 100%; }
.rlogo { font: 40px "Liberation Serif", serif; fill: #fff; }
.cmdt { font: 700 18px "Liberation Mono", monospace; fill: #e8e8e8; }
.offt { font: 700 25px "Open Sans", sans-serif; fill: #fff; }
.tray { margin-left: auto; display: flex; align-items: center; padding-right: 6px; color: #fff; font: 30.200px/47px "Open Sans", sans-serif; }
.g1 { margin-left: 25px; } .g2 { margin-left: 20px; } .g3 { margin-left: 21px; }
.lang { margin-left: 28px; width: 54px; }
.clock { margin-left: 36px; width: 158px; display: flex; flex-direction: column; align-items: center; }
.tm { font-size: 28.800px; }
.notif { margin: 23px 0 0 47px; }
.bdg { font: 32px "Open Sans", sans-serif; fill: #fff; }
</style>
